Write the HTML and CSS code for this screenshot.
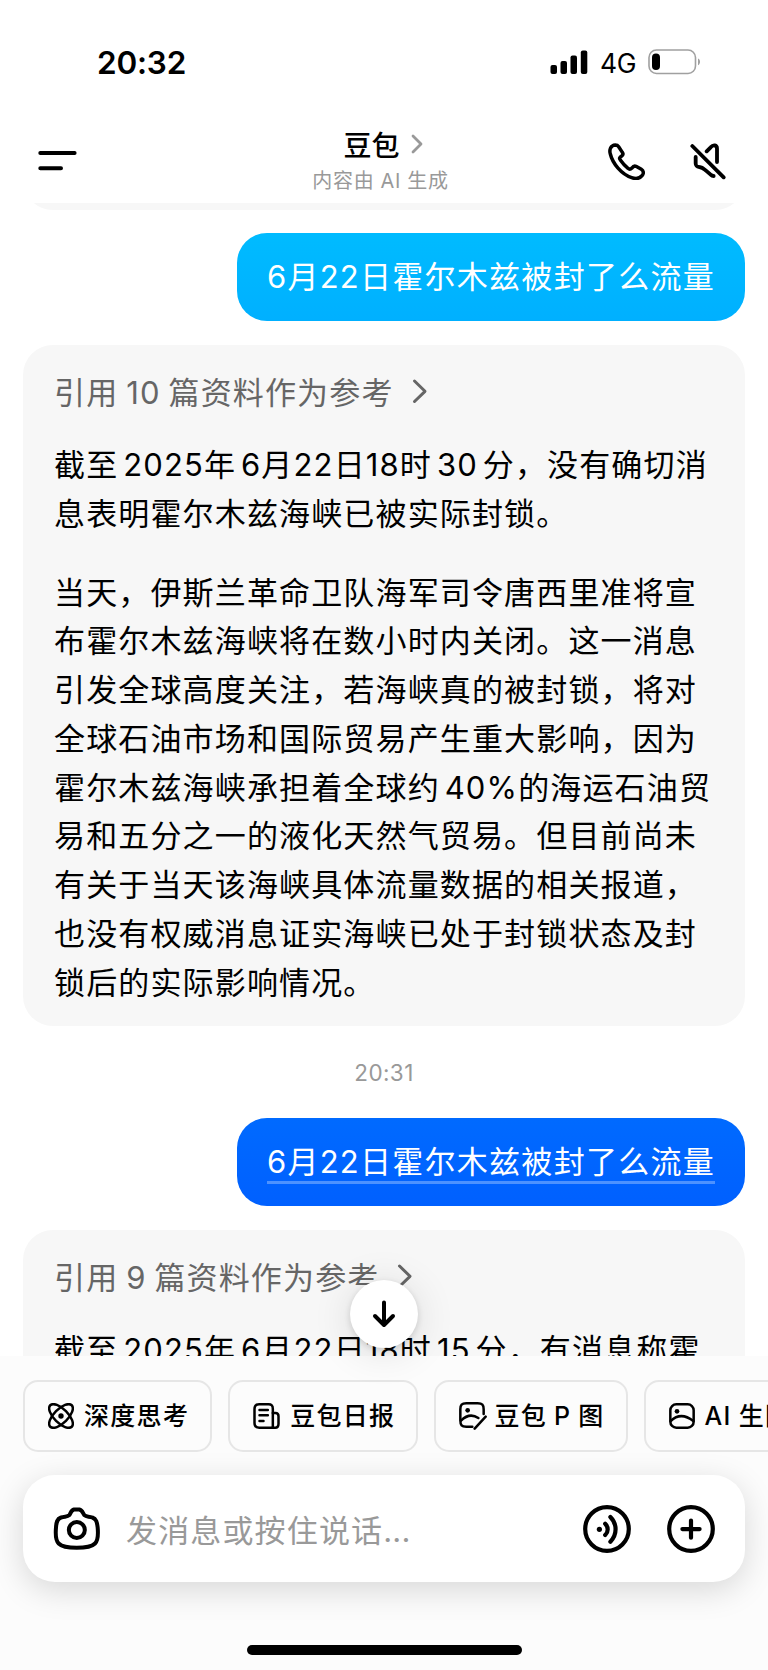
FILE: index.html
```html
<!DOCTYPE html>
<html lang="zh-CN">
  <head>
    <meta charset="UTF-8">
    <meta name="viewport" content="width=device-width, initial-scale=1.0">
    <title>豆包</title>
    <link rel="stylesheet" href="styles.css">
  </head>
  <body>
    <div class="status-bar">
      <span class="clock">20:32</span>
      <div class="status-icons">
        <svg class="signal" width="38" height="24" viewBox="0 0 38 24">
          <rect x="0.5" y="15" width="6.5" height="9" rx="2"/>
          <rect x="10.5" y="11" width="6.5" height="13" rx="2"/>
          <rect x="20.5" y="5.5" width="6.5" height="18.5" rx="2"/>
          <rect x="30.8" y="0.5" width="6.5" height="23.5" rx="2"/>
        </svg>
        <span class="network">4G</span>
        <svg class="battery" width="53" height="26" viewBox="0 0 53 26">
          <rect x="1" y="1" width="46.5" height="23.5" rx="7.5" fill="none" stroke="#a0a0a0" stroke-width="1.6"/>
          <rect x="4" y="4.5" width="8" height="16.5" rx="4"/>
          <path d="M50 9.5c2.7 1 2.7 5.7 0 6.7z" fill="#a0a0a0"/>
        </svg>
      </div>
    </div>

    <header class="header">
      <div class="header-left">
        <svg width="40" height="22" viewBox="0 0 40 22" stroke="#000" stroke-width="4" stroke-linecap="round">
          <path d="M2.3 3H36.6M2.3 18.2H23"/>
        </svg>
      </div>
      <div class="header-title">
        <div class="name">豆包
          <svg width="12" height="20" viewBox="0 0 12 20" fill="none" stroke="#999" stroke-width="2.8" stroke-linecap="round" stroke-linejoin="round">
            <path d="M2 2l8 8-8 8"/>
          </svg>
        </div>
        <div class="subtitle">内容由 AI 生成</div>
      </div>
      <div class="header-right">
        <svg width="37" height="37" viewBox="0 0 111 111" fill="none" stroke="#000" stroke-width="10.5" stroke-linejoin="round">
          <path d="M22 6C27 6 30 8 32 11L43 28C46 32 45 36 41 39C34 44 33 46 37 51C44 61 51 69 60 76C64 80 68 79 72 75C76 69 79 68 84 70L100 79C107 83 108 92 102 98C95 107 83 108 71 104C40 93 14 62 7 33C3 20 8 7 22 6Z"/>
        </svg>
        <svg width="36" height="37" viewBox="0 0 108 111" fill="none" stroke="#000" stroke-width="11.5" stroke-linecap="round" stroke-linejoin="round">
          <path d="M7 9L101 103"/>
          <path d="M50 25L62 13C70 4 81 6 81 17V57"/>
          <path d="M17 42V61C17 69 20 71 28 72C38 73 41 77 48 83L62 95C65 98 68 99 71 99"/>
        </svg>
      </div>
    </header>

    <main class="chat">
      <div class="card card-previous"></div>
      <div class="bubble bubble-light">6月22日霍尔木兹被封了么流量</div>

      <div class="card">
        <div class="reference">引用 10 篇资料作为参考
          <svg width="16" height="26" viewBox="0 0 16 26" fill="none" stroke="#666" stroke-width="3" stroke-linecap="round" stroke-linejoin="round">
            <path d="M2.5 3l10.5 10.3L2.5 23.5"/>
          </svg>
        </div>
        <p>截至 2025年 6月22日18时 30 分，没有确切消<br>息表明霍尔木兹海峡已被实际封锁。</p>
        <p>当天，伊斯兰革命卫队海军司令唐西里准将宣<br>布霍尔木兹海峡将在数小时内关闭。这一消息<br>引发全球高度关注，若海峡真的被封锁，将对<br>全球石油市场和国际贸易产生重大影响，因为<br>霍尔木兹海峡承担着全球约 40%的海运石油贸<br>易和五分之一的液化天然气贸易。但目前尚未<br>有关于当天该海峡具体流量数据的相关报道，<br>也没有权威消息证实海峡已处于封锁状态及封<br>锁后的实际影响情况。</p>
      </div>

      <div class="time">20:31</div>
      <div class="bubble bubble-dark"><span class="underlined">6月22日霍尔木兹被封了么流量</span></div>

      <div class="card">
        <div class="reference">引用 9 篇资料作为参考
          <svg width="16" height="26" viewBox="0 0 16 26" fill="none" stroke="#666" stroke-width="3" stroke-linecap="round" stroke-linejoin="round">
            <path d="M2.5 3l10.5 10.3L2.5 23.5"/>
          </svg>
        </div>
        <p>截至 2025年 6月22日18时 15 分，有消息称霍</p>
      </div>
    </main>

    <footer class="footer">
      <button class="scroll-down">
        <svg width="24" height="28" viewBox="0 0 24 28" fill="none" stroke="#000" stroke-width="4" stroke-linecap="round" stroke-linejoin="round">
          <path d="M12 2.5V24.5M3 16l9 9 9-9"/>
        </svg>
      </button>

      <div class="chips">
        <div class="chip">
          <svg width="26" height="26" viewBox="0 0 26 26" fill="none" stroke="#000" stroke-width="2.5">
            <ellipse cx="13" cy="13" rx="15.2" ry="7" transform="rotate(45 13 13)"/>
            <ellipse cx="13" cy="13" rx="15.2" ry="7" transform="rotate(-45 13 13)"/>
            <circle cx="13" cy="13" r="2.7" fill="#000" stroke="none"/>
          </svg>
          <span>深度思考</span>
        </div>
        <div class="chip">
          <svg width="27" height="26" viewBox="0 0 80 78" fill="none" stroke="#000" stroke-width="7.5" stroke-linecap="round" stroke-linejoin="round">
            <path d="M59 74H18C8 74 4 70 4 60V18C4 8 8 4 18 4H46C56 4 59 8 59 18V74"/>
            <path d="M59 30H67C74 30 76 33 76 40V62C76 70 73 74 66 74H58"/>
            <path d="M19 21H44M19 37H44M19 54H31"/>
          </svg>
          <span>豆包日报</span>
        </div>
        <div class="chip chip-edit">
          <svg width="28" height="28" viewBox="0 0 84 84" fill="none" stroke="#000" stroke-width="7.5" stroke-linecap="round">
            <path d="M74 36V22C74 8 70 4 56 4H22C8 4 4 8 4 22V54C4 70 8 74 22 74H40"/>
            <path d="M6 56C22 40 40 36 58 48M80 44L47 80"/>
            <circle cx="26" cy="25" r="7" fill="#000" stroke="none"/>
          </svg>
          <span>豆包 P 图</span>
        </div>
        <div class="chip">
          <svg width="26" height="26" viewBox="0 0 78 78" fill="none" stroke="#000" stroke-width="7.5" stroke-linecap="round">
            <rect x="4" y="4" width="70" height="70" rx="18"/>
            <path d="M5 54C26 34 50 36 73 54"/>
            <circle cx="24" cy="25" r="7" fill="#000" stroke="none"/>
          </svg>
          <span>AI 生图</span>
        </div>
      </div>

      <div class="input-bar">
        <svg width="48" height="45" viewBox="0 0 144 134" fill="none" stroke="#000" stroke-width="12" stroke-linejoin="round">
          <path d="M49 27C54 20 54 12 63 10H79C88 12 89 20 94 27C100 33 108 30 118 34C130 38 132 48 134 64C136 86 134 104 126 112C116 122 92 125 71 125C50 125 27 122 17 112C9 104 7 86 9 64C10 48 12 38 24 34C35 30 43 33 49 27Z"/>
          <circle cx="71.5" cy="71.5" r="24"/>
        </svg>
        <span class="placeholder">发消息或按住说话<span class="dots">...</span></span>
        <svg width="48" height="48" viewBox="0 0 48 48" fill="none" stroke="#000" stroke-width="4.2" stroke-linecap="round">
          <circle cx="24" cy="24" r="21.8"/>
          <circle cx="16.4" cy="24.3" r="2.6" fill="#000" stroke="none"/>
          <path d="M22.2 18.7C25.5 22 25.5 26.8 22.2 30"/>
          <path d="M27.4 12C34.3 19 34.3 29.7 27.4 36.7"/>
        </svg>
        <svg width="48" height="48" viewBox="0 0 48 48" fill="none" stroke="#000" stroke-width="4.2" stroke-linecap="round">
          <circle cx="24" cy="24" r="21.8"/>
          <path d="M24 15.5V32.7M15.4 24.1H32.6"/>
        </svg>
      </div>

      <div class="home-indicator"></div>
    </footer>
  </body>
</html>
```

FILE: styles.css
```css
* {
  box-sizing: border-box;
}

body {
  font-family: Inter, "Noto Sans CJK SC", sans-serif;
  font-size: 31px;
  letter-spacing: 1.15px;
  background-color: #fff;
  color: #000;
  margin: 0;
  height: 1670px;
  display: flex;
  flex-direction: column;
  overflow: hidden;
}

svg {
  display: block;
  flex-shrink: 0;
}

/* 状态栏 */
.status-bar {
  height: 124px;
  padding: 0 67px 0 97px;
  display: flex;
  justify-content: space-between;
  align-items: center;
}

.clock {
  font-size: 31.5px;
  font-weight: 600;
  letter-spacing: -0.2px;
}

.status-icons {
  display: flex;
  align-items: center;
}

.network {
  font-size: 26.5px;
  letter-spacing: -0.5px;
  margin: 2px 12px 0;
}

/* 顶部导航 */
.header {
  height: 79px;
  padding: 0 42px 0 38px;
  display: grid;
  grid-template-columns: 160px 1fr 160px;
}

.header-left {
  padding-top: 26px;
}

.header-title {
  display: flex;
  flex-direction: column;
  align-items: center;
}

.name {
  display: flex;
  align-items: center;
  gap: 11px;
  height: 42px;
  font-size: 28px;
  font-weight: 500;
  letter-spacing: 0;
  margin-top: -1px;
  padding-left: 2px;
}

.subtitle {
  font-size: 20px;
  line-height: 32px;
  letter-spacing: 0.8px;
  word-spacing: -0.5px;
  margin-right: 3px;
  color: #999;
}

.header-right {
  display: flex;
  justify-content: flex-end;
  gap: 45px;
  padding-top: 19px;
}

/* 聊天内容 */
.chat {
  height: 1153px;
  padding: 0 23px;
  display: flex;
  flex-direction: column;
  overflow: hidden;
  white-space: nowrap;
}

.card {
  flex-shrink: 0;
  background-color: #f7f7f7;
  border-radius: 30px;
  padding: 24px 31px 19px;
  margin-top: 24px;
}

.card-previous {
  height: 70px;
  margin-top: -63px;
}

.card p {
  margin: 0;
  line-height: 48.75px;
  word-spacing: -5px;
}

.card p + p {
  margin-top: 30px;
}

.reference {
  display: flex;
  align-items: center;
  gap: 18px;
  height: 43px;
  margin-bottom: 29px;
  word-spacing: -2px;
  color: #666;
}

.bubble {
  flex-shrink: 0;
  align-self: flex-end;
  height: 88px;
  margin-top: 23px;
  padding: 0 30px;
  border-radius: 30px;
  line-height: 87px;
  letter-spacing: 1.27px;
  color: #fff;
}

.bubble-light {
  background: linear-gradient(#00bbff, #00b0ff);
}

.bubble-dark {
  background: linear-gradient(#006aff, #0060ff);
  margin-top: 0;
}

.underlined {
  border-bottom: 3px solid #4d92ff;
  padding-bottom: 1px;
}

.time {
  flex-shrink: 0;
  height: 92px;
  line-height: 93px;
  text-align: center;
  font-size: 22.5px;
  letter-spacing: 0.4px;
  color: #999;
}

/* 底部输入区 */
.footer {
  position: relative;
  height: 314px;
  padding-top: 24px;
  background-color: #fcfcfc;
}

.scroll-down {
  position: absolute;
  top: -76px;
  left: 350px;
  width: 68px;
  height: 68px;
  padding: 0;
  border: none;
  border-radius: 50%;
  background-color: #fff;
  box-shadow: 0 2px 6px rgba(0, 0, 0, 0.14), 0 4px 40px rgba(0, 0, 0, 0.12);
  display: flex;
  justify-content: center;
  align-items: center;
}

.chips {
  display: flex;
  gap: 16px;
  padding-left: 23px;
  overflow: hidden;
}

.chip {
  flex-shrink: 0;
  display: flex;
  align-items: center;
  gap: 10px;
  height: 72px;
  padding: 0 21px 0 23px;
  border: 2px solid #e6e6e6;
  border-radius: 15px;
  font-size: 25px;
  font-weight: 500;
  line-height: 34px;
  letter-spacing: 1.3px;
  word-spacing: -1px;
  white-space: nowrap;
}

.chip-edit {
  gap: 7px;
}

.chip span {
  margin-top: -1px;
}

.input-bar {
  display: flex;
  align-items: center;
  height: 107px;
  margin: 23px 23px 0;
  padding: 0 30px;
  border-radius: 32px;
  background-color: #fff;
  box-shadow: 0 8px 32px rgba(0, 0, 0, 0.15);
}

.placeholder {
  flex: 1;
  margin-left: 25px;
  color: #999;
}

.dots {
  letter-spacing: 0.2px;
}

.input-bar svg + svg {
  margin-left: 36px;
}

.home-indicator {
  width: 275px;
  height: 10px;
  margin: 63px auto 0;
  border-radius: 5px;
  background-color: #000;
}
```
